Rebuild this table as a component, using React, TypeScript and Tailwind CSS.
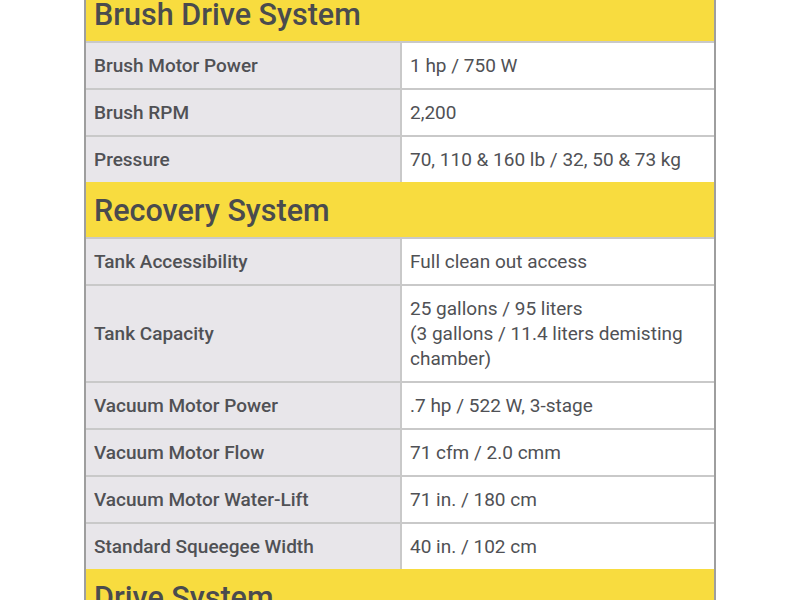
import React from "react";

type Section = { title: string; rows: [string, React.ReactNode][] };

const sections: Section[] = [
  {
    title: "Brush Drive System",
    rows: [
      ["Brush Motor Power", "1 hp / 750 W"],
      ["Brush RPM", "2,200"],
      ["Pressure", "70, 110 & 160 lb / 32, 50 & 73 kg"],
    ],
  },
  {
    title: "Recovery System",
    rows: [
      ["Tank Accessibility", "Full clean out access"],
      [
        "Tank Capacity",
        <>
          25 gallons / 95 liters
          <br />
          (3 gallons / 11.4 liters demisting chamber)
        </>,
      ],
      ["Vacuum Motor Power", ".7 hp / 522 W, 3-stage"],
      ["Vacuum Motor Flow", "71 cfm / 2.0 cmm"],
      ["Vacuum Motor Water-Lift", "71 in. / 180 cm"],
      ["Standard Squeegee Width", "40 in. / 102 cm"],
    ],
  },
  {
    title: "Drive System",
    rows: [
      ["Drive Type", "Traction drive"],
      ["Speed", "0–4 mph / 0–6.4 kph"],
    ],
  },
];

export default function App() {
  return (
    <div
      className="min-h-screen bg-white"
      style={{ fontFamily: "Roboto, 'Liberation Sans', sans-serif" }}
    >
      <div className="w-[632px] mx-auto mt-[-14px] border-x-2 border-[#9e9e9e]">
        {sections.map((s) => (
          <div key={s.title}>
            <div className="h-[55px] bg-[#f8dc3f] flex items-center pl-[8px] pt-[3px] text-[30.5px] font-medium text-[#4a4b4e] leading-none">
              {s.title}
            </div>
            {s.rows.map(([label, value]) => (
              <div
                key={label}
                className="grid grid-cols-[316px_1fr] border-t-2 border-[#c9c9c9]"
              >
                <div className="bg-[#e8e6ea] border-r-2 border-[#c9c9c9] pl-[8px] py-[10px] flex items-center text-[19px] leading-[25px] font-medium text-[#505155]">
                  {label}
                </div>
                <div className="bg-white pl-[8px] pr-[8px] py-[10px] text-[19px] leading-[25px] text-[#505155]">
                  {value}
                </div>
              </div>
            ))}
          </div>
        ))}
      </div>
    </div>
  );
}
